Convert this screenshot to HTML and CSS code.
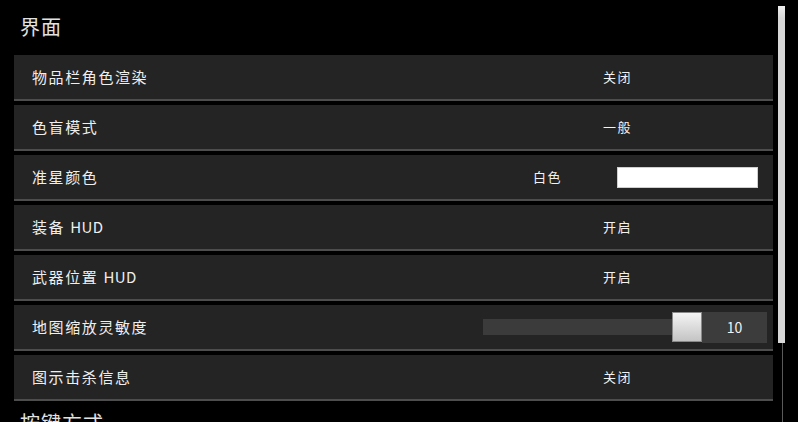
FILE: index.html
```html
<!DOCTYPE html>
<html lang="zh-CN">
<head>
<meta charset="utf-8">
<link rel="stylesheet" href="styles.css">
</head>
<body>
<div class="page">
  <main class="content">
    <section class="section">
      <h2 class="section-title">界面</h2>
      <div class="row">
        <span class="label">物品栏角色渲染</span>
        <div class="control"><span class="value">关闭</span></div>
      </div>
      <div class="row">
        <span class="label">色盲模式</span>
        <div class="control"><span class="value">一般</span></div>
      </div>
      <div class="row">
        <span class="label">准星颜色</span>
        <div class="control color-control">
          <span class="value">白色</span>
          <span class="swatch"></span>
        </div>
      </div>
      <div class="row">
        <span class="label">装备 <span class="latin">HUD</span></span>
        <div class="control"><span class="value">开启</span></div>
      </div>
      <div class="row">
        <span class="label">武器位置 <span class="latin">HUD</span></span>
        <div class="control"><span class="value">开启</span></div>
      </div>
      <div class="row">
        <span class="label">地图缩放灵敏度</span>
        <div class="control slider-control">
          <span class="track"></span>
          <span class="thumb"></span>
          <span class="number">10</span>
        </div>
      </div>
      <div class="row">
        <span class="label">图示击杀信息</span>
        <div class="control"><span class="value">关闭</span></div>
      </div>
    </section>
    <section class="section">
      <h2 class="section-title">按键方式</h2>
    </section>
  </main>
  <div class="scrollbar">
    <div class="scroll-thumb"></div>
    <div class="scroll-rail"></div>
  </div>
</div>
</body>
</html>
```

FILE: styles.css
```css
html, body {
  margin: 0;
  padding: 0;
  background: #000;
  height: 422px;
  overflow: hidden;
}

body {
  font-family: "Noto Sans CJK SC", "Noto Sans", sans-serif;
  color: #ececec;
}

.page {
  display: flex;
  height: 422px;
}

.content {
  width: 759px;
  padding-left: 14px;
  padding-top: 9px;
}

.section-title {
  margin: 0 0 10px 6px;
  height: 36px;
  display: flex;
  align-items: center;
  font-size: 20px;
  font-weight: normal;
  color: #e2e2e2;
  letter-spacing: 1px;
  padding-bottom: 2px;
  box-sizing: border-box;
}

.row {
  display: flex;
  align-items: center;
  height: 44px;
  padding-bottom: 2px;
  box-sizing: border-box;
  height: 46px;
  background: #242424;
  border-bottom: 2px solid #4d4d4d;
  margin-bottom: 4px;
}

.label {
  flex: 1;
  padding-left: 18px;
  font-size: 15px;
  letter-spacing: 1.6px;
  color: #efefef;
}

.latin {
  letter-spacing: 0.4px;
}

.control {
  width: 311px;
  height: 100%;
  display: flex;
  align-items: center;
  justify-content: center;
}

.value {
  font-size: 13px;
  letter-spacing: 1.5px;
  color: #f2f2f2;
}

.color-control {
  justify-content: flex-start;
  padding-left: 71px;
  padding-right: 15px;
  box-sizing: border-box;
}

.swatch {
  margin-left: auto;
  width: 141px;
  height: 21px;
  margin-top: 2px;
  background: #fff;
  box-shadow: inset 0 0 0 1px #cfcfcf;
}

.slider-control {
  justify-content: flex-start;
  padding-left: 21px;
  padding-right: 6px;
  box-sizing: border-box;
}

.track {
  flex: 1;
  height: 16px;
  margin-top: 2px;
  background: #3b3b3b;
}

.thumb {
  width: 30px;
  height: 30px;
  margin-top: 2px;
  box-sizing: border-box;
  border: 1px solid #8a8a8a;
  background: linear-gradient(#f4f4f4, #c4c4c4);
}

.number {
  width: 65px;
  height: 31px;
  margin-top: 2px;
  background: #3c3c3c;
  display: flex;
  align-items: center;
  justify-content: center;
  font-size: 14px;
  color: #f2f2f2;
}

.scrollbar {
  width: 7px;
  margin-left: 5px;
  padding-top: 6px;
  display: flex;
  flex-direction: column;
  align-items: center;
}

.scroll-thumb {
  width: 7px;
  height: 337px;
  background: linear-gradient(#f0f0f0, #d8d8d8 12px, #d8d8d8);
  flex-shrink: 0;
}

.scroll-rail {
  flex: 1;
  width: 1px;
  margin-left: 1px;
  background: #5a5a5a;
}
```
